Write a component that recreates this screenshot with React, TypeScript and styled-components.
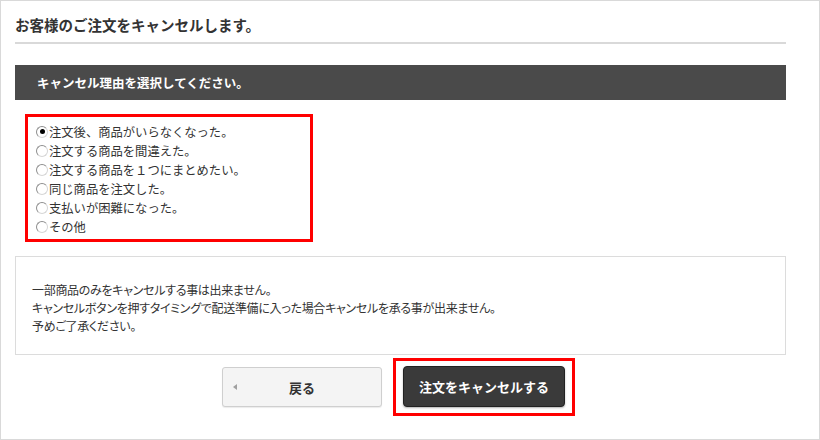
import { useState } from "react";
import styled, { createGlobalStyle } from "styled-components";

const GlobalStyle = createGlobalStyle`
  html, body {
    margin: 0;
    padding: 0;
    background: #fff;
  }
  body {
    font-family: "Noto Sans CJK JP", "Noto Sans", sans-serif;
    color: #333;
  }
`;

const Frame = styled.div`
  box-sizing: border-box;
  width: 820px;
  height: 440px;
  border: 1px solid #d9d9d9;
  padding: 0 33px 0 14px;
`;

const Title = styled.h1`
  margin: 0;
  height: 41px;
  line-height: 47px;
  font-size: 14.5px;
  font-weight: bold;
  color: #333;
  border-bottom: 2px solid #d9d9d9;
`;

const SectionBar = styled.div`
  margin-top: 21px;
  height: 35px;
  line-height: 35px;
  padding-left: 22px;
  background: #4a4a4a;
  color: #fff;
  font-size: 12.5px;
  font-weight: bold;
`;

const ReasonBox = styled.div`
  box-sizing: border-box;
  width: 288px;
  height: 128px;
  margin: 14px 0 0 10px;
  border: 3px solid #ff0000;
  padding: 5px 0 0 8px;
`;

const ReasonRow = styled.label`
  display: flex;
  align-items: center;
  height: 19px;
  font-size: 12.3px;
  color: #333;
  cursor: pointer;
`;

const Radio = styled.input`
  appearance: none;
  box-sizing: border-box;
  width: 12px;
  height: 12px;
  margin: 0 1px 0 0;
  border-radius: 50%;
  border: 1px solid #8e8e8e;
  border-right-color: #d6d6d6;
  border-bottom-color: #d6d6d6;
  background: #fff;
  position: relative;

  &:checked::after {
    content: "";
    position: absolute;
    left: 2.5px;
    top: 2.5px;
    width: 5px;
    height: 5px;
    border-radius: 50%;
    background: #000;
  }
`;

const Notice = styled.div`
  box-sizing: border-box;
  margin-top: 14px;
  height: 99px;
  border: 1px solid #dcdcdc;
  padding: 24px 16px 0;
`;

const NoticeLine = styled.p`
  margin: 0;
  font-size: 12px;
  line-height: 18px;
  color: #333;
  font-feature-settings: "palt";
  letter-spacing: -0.3px;
`;

const ButtonRow = styled.div`
  display: flex;
  justify-content: center;
  align-items: center;
  gap: 11px;
  margin-top: 3px;
  padding-right: 4px;
`;

const BackButton = styled.button`
  position: relative;
  box-sizing: border-box;
  width: 160px;
  height: 40px;
  border: 1px solid #cfcfcf;
  border-radius: 3px;
  background: #f4f4f4;
  box-shadow: 0 1px 1px rgba(0, 0, 0, 0.08);
  font-family: inherit;
  font-size: 13px;
  font-weight: bold;
  color: #333;
  cursor: pointer;

  &::before {
    content: "";
    position: absolute;
    left: 10px;
    top: 50%;
    margin-top: -3px;
    border-style: solid;
    border-width: 3px 4px 3px 0;
    border-color: transparent #a0a0a0 transparent transparent;
  }
`;

const Highlight = styled.div`
  border: 3px solid #ff0000;
  padding: 5px 7px 6px 7px;
  display: flex;
`;

const CancelButton = styled.button`
  box-sizing: border-box;
  width: 162px;
  height: 41px;
  border: 1px solid #222;
  border-radius: 4px;
  background: #3a3a3a;
  box-shadow: 0 1px 2px rgba(0, 0, 0, 0.3);
  font-family: inherit;
  font-size: 13px;
  font-weight: bold;
  color: #fff;
  cursor: pointer;
`;

const reasons = [
  "注文後、商品がいらなくなった。",
  "注文する商品を間違えた。",
  "注文する商品を１つにまとめたい。",
  "同じ商品を注文した。",
  "支払いが困難になった。",
  "その他",
];

export default function App() {
  const [selected, setSelected] = useState(0);

  return (
    <>
      <GlobalStyle />
      <Frame>
        <Title>お客様のご注文をキャンセルします。</Title>
        <SectionBar>キャンセル理由を選択してください。</SectionBar>
        <ReasonBox>
          {reasons.map((reason, i) => (
            <ReasonRow key={reason}>
              <Radio
                type="radio"
                name="reason"
                checked={selected === i}
                onChange={() => setSelected(i)}
              />
              {reason}
            </ReasonRow>
          ))}
        </ReasonBox>
        <Notice>
          <NoticeLine>一部商品のみをキャンセルする事は出来ません。</NoticeLine>
          <NoticeLine>
            キャンセルボタンを押すタイミングで配送準備に入った場合キャンセルを承る事が出来ません。
          </NoticeLine>
          <NoticeLine>予めご了承ください。</NoticeLine>
        </Notice>
        <ButtonRow>
          <BackButton type="button">戻る</BackButton>
          <Highlight>
            <CancelButton type="button">注文をキャンセルする</CancelButton>
          </Highlight>
        </ButtonRow>
      </Frame>
    </>
  );
}
